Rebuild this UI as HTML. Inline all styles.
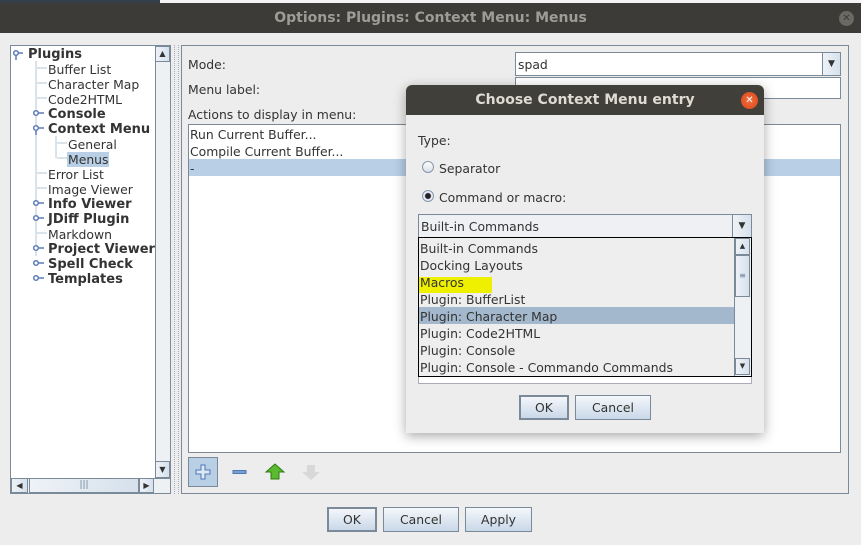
<!DOCTYPE html>
<html><head><meta charset="utf-8"><style>
*{box-sizing:border-box;margin:0;padding:0}
body{width:861px;height:545px;overflow:hidden;background:#ededed;font-family:"DejaVu Sans","Liberation Sans",sans-serif;font-size:12.4px;color:#333;position:relative}
.a{position:absolute}
.t{position:absolute;white-space:nowrap;line-height:15px;margin-top:1px}
.b{font-weight:bold}
.btn{position:absolute;border:1px solid #7a8a99;background:linear-gradient(#f4f7fb,#c9d8e8);text-align:center;line-height:23px;color:#333}
.sb{background:linear-gradient(90deg,#eef2f7,#d6e1ec);border:1px solid #7a8a99}
</style></head><body>
<div class="a" style="left:0;top:0;width:861px;height:3px;background:#f4f4f4"></div>
<div class="a" style="left:0;top:0;width:160px;height:3px;background:#33404c"></div>
<div class="a" style="left:0;top:3px;width:861px;height:30px;background:#3c3b37"></div>
<div class="t b" style="left:0;width:861px;text-align:center;top:10px;font-size:14px;color:#9e9c97">Options: Plugins: Context Menu: Menus</div>
<div class="a" style="left:839px;top:11px;width:15px;height:15px;border-radius:50%;background:#6a6964;color:#3c3b37;font-size:10px;text-align:center;line-height:15px">✕</div>

<!-- tree -->
<div class="a" style="left:10px;top:45px;width:161px;height:449px;border:1px solid #7a8a99;background:#fff"></div>
<div class="a" style="left:155px;top:46px;width:15px;height:432px;background:#eef1f4;border-left:1px solid #7a8a99"></div>
<div class="a sb" style="left:155px;top:46px;width:15px;height:16px;font-size:8px;text-align:center;line-height:14px">▲</div>
<div class="a sb" style="left:155px;top:461px;width:15px;height:17px;font-size:8px;text-align:center;line-height:15px">▼</div>
<div class="a" style="left:11px;top:478px;width:159px;height:15px;background:#eef1f4;border-top:1px solid #7a8a99"></div>
<div class="a sb" style="left:11px;top:478px;width:17px;height:15px;font-size:8px;text-align:center;line-height:13px">◀</div>
<div class="a sb" style="left:29px;top:478px;width:110px;height:15px;text-align:center;line-height:12px;font-size:9px;color:#6a7f96">|||</div>
<div class="a sb" style="left:139px;top:478px;width:15px;height:15px;font-size:8px;text-align:center;line-height:13px">▶</div>
<svg class="a" style="left:11px;top:46px" width="144" height="240">
<g stroke="#b4c4d6" fill="none"><line x1="25" y1="15" x2="25" y2="210"/><line x1="45" y1="90" x2="45" y2="112"/>
<line x1="26" y1="22" x2="36" y2="22"/><line x1="26" y1="37" x2="36" y2="37"/><line x1="26" y1="52" x2="36" y2="52"/><line x1="46" y1="97" x2="56" y2="97"/><line x1="46" y1="112" x2="56" y2="112"/><line x1="26" y1="127" x2="36" y2="127"/><line x1="26" y1="142" x2="36" y2="142"/><line x1="26" y1="187" x2="36" y2="187"/></g>
<g stroke="#5b7bb8" stroke-width="1.5" fill="#fff">
<circle cx="5" cy="7" r="2.3"/><line x1="5" y1="9" x2="5" y2="14"/><line x1="7" y1="7" x2="12" y2="7"/>
<circle cx="25" cy="67" r="2.3"/><line x1="27" y1="67" x2="33" y2="67"/>
<circle cx="25" cy="82" r="2.3"/><line x1="25" y1="84" x2="25" y2="89"/><line x1="27" y1="82" x2="33" y2="82"/>
<circle cx="25" cy="157" r="2.3"/><line x1="27" y1="157" x2="33" y2="157"/>
<circle cx="25" cy="172" r="2.3"/><line x1="27" y1="172" x2="33" y2="172"/>
<circle cx="25" cy="202" r="2.3"/><line x1="27" y1="202" x2="33" y2="202"/>
<circle cx="25" cy="217" r="2.3"/><line x1="27" y1="217" x2="33" y2="217"/>
<circle cx="25" cy="232" r="2.3"/><line x1="27" y1="232" x2="33" y2="232"/></g></svg>
<div class="t b" style="left:28px;top:46px;font-size:13px">Plugins</div>
<div class="t" style="left:48px;top:61px">Buffer List</div>
<div class="t" style="left:48px;top:76px">Character Map</div>
<div class="t" style="left:48px;top:91px">Code2HTML</div>
<div class="t b" style="left:48px;top:106px;font-size:13px">Console</div>
<div class="t b" style="left:48px;top:121px;font-size:13px">Context Menu</div>
<div class="t" style="left:68px;top:136px">General</div>
<div class="t" style="left:67px;top:151px;background:#b8cfe5;padding:0 1px">Menus</div>
<div class="t" style="left:48px;top:166px">Error List</div>
<div class="t" style="left:48px;top:181px">Image Viewer</div>
<div class="t b" style="left:48px;top:196px;font-size:13px">Info Viewer</div>
<div class="t b" style="left:48px;top:211px;font-size:13px">JDiff Plugin</div>
<div class="t" style="left:48px;top:226px">Markdown</div>
<div class="t b" style="left:48px;top:241px;font-size:13px">Project Viewer</div>
<div class="t b" style="left:48px;top:256px;font-size:13px">Spell Check</div>
<div class="t b" style="left:48px;top:271px;font-size:13px">Templates</div>

<div class="a" style="left:174px;top:45px;width:5px;height:449px;border-left:1px dotted #aab;border-right:1px dotted #aab"></div>

<!-- right panel -->
<div class="a" style="left:181px;top:45px;width:668px;height:449px;border:1px solid #7a8a99"></div>
<div class="t" style="left:188px;top:56px">Mode:</div>
<div class="a" style="left:515px;top:52px;width:326px;height:24px;border:1px solid #7a8a99;background:#fff"></div>
<div class="t" style="left:518px;top:56px">spad</div>
<div class="a sb" style="left:822px;top:52px;width:19px;height:24px;font-size:9px;text-align:center;line-height:22px">▼</div>
<div class="t" style="left:188px;top:81px">Menu label:</div>
<div class="a" style="left:515px;top:77px;width:326px;height:22px;border:1px solid #7a8a99;background:#fff"></div>
<div class="t" style="left:188px;top:106px">Actions to display in menu:</div>
<div class="a" style="left:188px;top:124px;width:653px;height:329px;border:1px solid #7a8a99;background:#fff"></div>
<div class="t" style="left:190px;top:126px">Run Current Buffer...</div>
<div class="t" style="left:190px;top:143px">Compile Current Buffer...</div>
<div class="a" style="left:189px;top:159px;width:651px;height:17px;background:#b8cfe5"></div>
<div class="t" style="left:190px;top:160px">-</div>
<div class="a" style="left:188px;top:457px;width:30px;height:30px;border:1px solid #7a8a99;background:#b8cfe5"></div>
<svg class="a" style="left:188px;top:457px" width="140" height="30">
<path d="M13 8h4v5h5v4h-5v5h-4v-5h-5v-4h5z" fill="#dde8f5" stroke="#4a78b8"/>
<rect x="45" y="13.5" width="13" height="3" fill="#7aa0d0" stroke="#4a78b8"/>
<path d="M87 7l-9 8h5v7h8v-7h5z" fill="#5bbb2e" stroke="#2e7a12"/>
<path d="M119 8h8v7h5l-9 8l-9-8h5z" fill="#d8d8d8"/></svg>
<div class="btn" style="left:327px;top:507px;width:50px;height:25px;border-width:2px;line-height:22px">OK</div>
<div class="btn" style="left:383px;top:507px;width:76px;height:25px">Cancel</div>
<div class="btn" style="left:465px;top:507px;width:67px;height:25px">Apply</div>

<!-- dialog -->
<div class="a" style="left:406px;top:85px;width:358px;height:348px;background:#ededed;border-radius:6px 6px 0 0;box-shadow:0 3px 12px rgba(0,0,0,.35)"></div>
<div class="a" style="left:406px;top:85px;width:358px;height:30px;background:#403f3a;border-radius:6px 6px 0 0"></div>
<div class="t b" style="left:406px;width:358px;text-align:center;top:92px;font-size:14px;color:#dfdbd2">Choose Context Menu entry</div>
<div class="a" style="left:741px;top:92px;width:17px;height:17px;border-radius:50%;background:radial-gradient(#f26d3d,#d9461a);color:#fff;font-size:10px;text-align:center;line-height:17px">✕</div>
<div class="t" style="left:418px;top:132px">Type:</div>
<div class="a" style="left:422px;top:161px;width:12px;height:12px;border-radius:50%;border:1px solid #8898a8;background:linear-gradient(#fff,#d6e0ea)"></div>
<div class="t" style="left:439px;top:160px">Separator</div>
<div class="a" style="left:422px;top:190px;width:12px;height:12px;border-radius:50%;border:1px solid #8898a8;background:radial-gradient(#222 0 2.5px,#eef 3.5px,#d6e0ea)"></div>
<div class="t" style="left:439px;top:189px">Command or macro:</div>
<div class="a" style="left:418px;top:214px;width:334px;height:24px;border:1px solid #7a8a99;background:#eef0f3"></div>
<div class="t" style="left:421px;top:218px">Built-in Commands</div>
<div class="a sb" style="left:732px;top:214px;width:20px;height:24px;font-size:9px;text-align:center;line-height:22px">▼</div>
<div class="a" style="left:418px;top:376px;width:334px;height:8px;border:1px solid #aab;border-top:0;background:#fff"></div>
<div class="a" style="left:418px;top:237px;width:334px;height:140px;border:1px solid #000;background:#eeeeee"></div>
<div class="a" style="left:419px;top:277px;width:73px;height:16px;background:#eef000"></div>
<div class="a" style="left:419px;top:307px;width:316px;height:17px;background:#a3b8cc"></div>
<div class="t" style="left:420px;top:240px">Built-in Commands</div>
<div class="t" style="left:420px;top:257px">Docking Layouts</div>
<div class="t" style="left:420px;top:274px">Macros</div>
<div class="t" style="left:420px;top:291px">Plugin: BufferList</div>
<div class="t" style="left:420px;top:308px">Plugin: Character Map</div>
<div class="t" style="left:420px;top:325px">Plugin: Code2HTML</div>
<div class="t" style="left:420px;top:342px">Plugin: Console</div>
<div class="t" style="left:420px;top:359px">Plugin: Console - Commando Commands</div>
<div class="a" style="left:734px;top:238px;width:17px;height:138px;background:#eef1f4;border-left:1px solid #7a8a99"></div>
<div class="a sb" style="left:735px;top:238px;width:15px;height:17px;font-size:7px;text-align:center;line-height:15px">▲</div>
<div class="a sb" style="left:735px;top:255px;width:15px;height:42px;font-size:8px;text-align:center;line-height:40px;color:#6a7f96">≡</div>
<div class="a sb" style="left:735px;top:358px;width:15px;height:17px;font-size:7px;text-align:center;line-height:15px">▼</div>
<div class="btn" style="left:519px;top:395px;width:50px;height:25px;border-width:2px;line-height:22px">OK</div>
<div class="btn" style="left:575px;top:395px;width:76px;height:25px">Cancel</div>
</body></html>
